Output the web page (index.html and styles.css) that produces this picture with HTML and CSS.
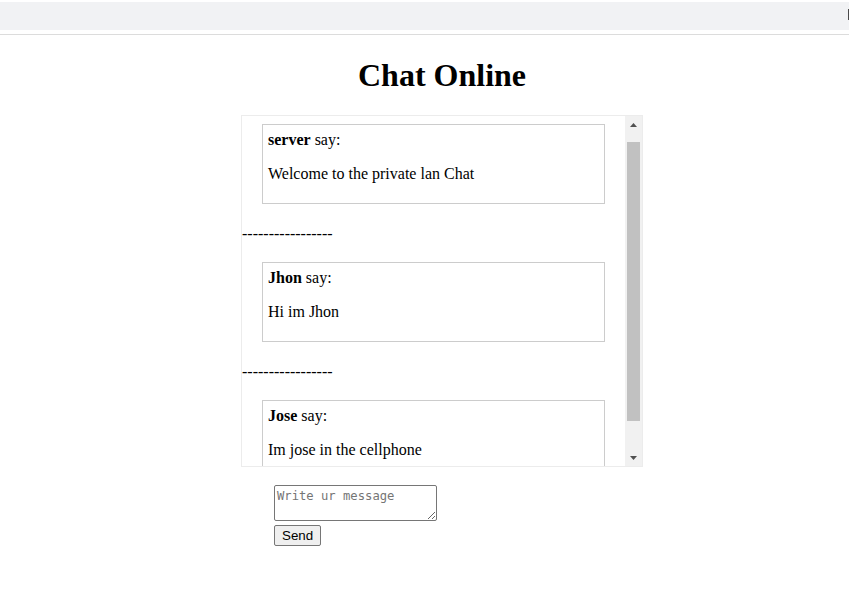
FILE: index.html
```html
<!DOCTYPE html>
<html lang="en">
<head>
<meta charset="utf-8">
<title>Chat Online</title>
<link rel="stylesheet" href="styles.css">
</head>
<body>
<div class="topbar"><span class="topbar-mark"></span></div>
<div class="topline"></div>
<main class="page">
  <h1 class="title">Chat Online</h1>
  <div class="chat-frame">
    <div class="chat" id="chat">
      <div class="msg">
        <b>server</b> say:
        <p class="msg-text">Welcome to the private lan Chat</p>
      </div>
      <div class="sep">-----------------</div>
      <div class="msg">
        <b>Jhon</b> say:
        <p class="msg-text">Hi im Jhon</p>
      </div>
      <div class="sep">-----------------</div>
      <div class="msg">
        <b>Jose</b> say:
        <p class="msg-text">Im jose in the cellphone</p>
      </div>
    </div>
    <div class="scrollbar" aria-hidden="true">
      <div class="sb-btn">
        <svg width="7" height="4" viewBox="0 0 7 4"><path d="M0 4L3.5 0L7 4z" fill="#505050"/></svg>
      </div>
      <div class="sb-track"><div class="sb-thumb"></div></div>
      <div class="sb-btn">
        <svg width="7" height="4" viewBox="0 0 7 4"><path d="M0 0L3.5 4L7 0z" fill="#505050"/></svg>
      </div>
    </div>
  </div>
  <form class="composer">
    <textarea class="input" placeholder="Write ur message"></textarea>
    <button type="button" class="send">Send</button>
  </form>
</main>
<script src="script.js"></script>
</body>
</html>
```

FILE: styles.css
```css
html, body {
  margin: 0;
  padding: 0;
  background: #ffffff;
}

body {
  font-family: "Liberation Serif", "Times New Roman", serif;
  font-size: 16px;
  color: #000;
}

.topbar {
  margin-top: 2px;
  height: 28px;
  background: #f1f2f4;
  display: flex;
  justify-content: flex-end;
  align-items: flex-start;
}

.topbar-mark {
  width: 1px;
  height: 11px;
  margin-top: 7px;
  background: #4a4a4a;
}

.topline {
  margin-top: 4px;
  height: 1px;
  background: #dcdcdc;
}

.page {
  width: 402px;
  margin-left: 241px;
}

.title {
  font-size: 32px;
  font-weight: bold;
  text-align: center;
  margin: 22px 0 21px;
  line-height: 37px;
}

.chat-frame {
  display: flex;
  width: 400px;
  height: 350px;
  border: 1px solid #ececec;
}

.chat {
  flex: 1;
  min-width: 0;
  overflow-y: auto;
  scrollbar-width: none;
}

.scrollbar {
  width: 17px;
  flex: none;
  display: flex;
  flex-direction: column;
  background: #f1f1f1;
}

.sb-btn {
  height: 17px;
  flex: none;
  display: flex;
  align-items: center;
  justify-content: center;
}

.sb-btn svg {
  display: block;
}

.sb-track {
  flex: 1;
  padding: 9px 2px 0;
}

.sb-thumb {
  height: 279px;
  background: #c1c1c1;
}

.msg {
  margin: 20px;
  padding: 6px 5px 4px;
  border: 1px solid #cccccc;
  line-height: 18px;
}

.msg-text {
  margin: 16px 0;
}

.sep {
  box-sizing: border-box;
  height: 18px;
  padding-top: 1px;
  line-height: 18px;
}

.composer {
  margin: 18px 0 0 33px;
}

.input {
  display: block;
  box-sizing: border-box;
  width: 163px;
  height: 36px;
  padding: 3px 2px 2px;
  margin: 0 0 4px;
  border: 1px solid #767676;
  border-radius: 2px;
  font-family: "DejaVu Sans Mono", monospace;
  font-size: 12.2px;
  resize: both;
}

.input::placeholder {
  color: #757575;
}

.send {
  box-sizing: border-box;
  height: 21px;
  padding: 0 7px;
  background: #efefef;
  border: 1px solid #767676;
  border-radius: 2px;
  font-family: "Liberation Sans", Arial, sans-serif;
  font-size: 13.33px;
  color: #000;
}
```

FILE: script.js
```js
document.getElementById('chat').scrollTop = 12;
```
